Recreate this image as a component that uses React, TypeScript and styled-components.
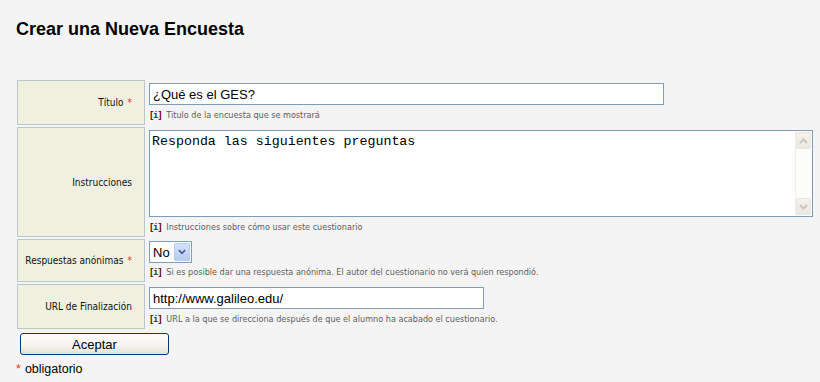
import React from "react";
import styled, { createGlobalStyle } from "styled-components";

const Global = createGlobalStyle`
  html, body { margin: 0; padding: 0; background: #f4f4f4; }
  body { font-family: "Liberation Sans", Arial, sans-serif; color: #000; }
`;

const Page = styled.div`
  padding: 0 0 0 16px;
  width: 820px;
  height: 382px;
  box-sizing: border-box;
  overflow: hidden;
`;

const Title = styled.h1`
  margin: 0;
  padding-top: 18px;
  height: 80px;
  box-sizing: border-box;
  font-family: "Liberation Sans", Arial, sans-serif;
  font-size: 18px;
  font-weight: bold;
  line-height: 22px;
  color: #000;
`;

const FormGrid = styled.div`
  display: grid;
  grid-template-columns: 128px 667px;
  column-gap: 2px;
  row-gap: 2px;
  margin-left: 1px;
`;

const LabelCell = styled.div`
  box-sizing: border-box;
  background: #eff0e0;
  border: 1px solid #bdc6c6;
  display: flex;
  align-items: center;
  justify-content: flex-end;
  padding-right: 12px;
  font-family: "DejaVu Sans Condensed", "DejaVu Sans", sans-serif;
  font-stretch: semi-condensed;
  font-size: 10px;
  color: #111;
  white-space: nowrap;
`;

const Req = styled.span`
  color: #e8322e;
  margin-left: 4px;
`;

const FieldCell = styled.div`
  padding: 3px 2px;
  display: flex;
  flex-direction: column;
  align-items: flex-start;
`;

const TextInput = styled.input<{ $w: number }>`
  box-sizing: border-box;
  width: ${(p) => p.$w}px;
  height: 22px;
  border: 1px solid #7f9db9;
  background: #fff;
  margin: 0;
  padding: 0 3px;
  font-family: "Liberation Sans", Arial, sans-serif;
  font-size: 13px;
  color: #000;
  outline: none;
`;

const AreaBox = styled.div`
  box-sizing: border-box;
  width: 664px;
  height: 87px;
  border: 1px solid #7f9db9;
  background: #fff;
  display: flex;
`;

const Area = styled.textarea`
  flex: 1;
  border: none;
  resize: none;
  margin: 0;
  padding: 3px 2px;
  font-family: "Liberation Mono", "Courier New", monospace;
  font-size: 13.3px;
  line-height: 15px;
  color: #000;
  background: #fff;
  outline: none;
  overflow: hidden;
`;

const ScrollBar = styled.div`
  width: 17px;
  padding: 1px 1px 1px 0;
  box-sizing: border-box;
  background: #fcfcf8;
  border-left: 1px solid #f1efe6;
  display: flex;
  flex-direction: column;
  justify-content: space-between;
`;

const ScrollBtn = styled.div`
  height: 15px;
  border: 1px solid #e8e6dc;
  border-radius: 2px;
  background: linear-gradient(#f3f2ec, #e9e8e0);
  display: flex;
  align-items: center;
  justify-content: center;
`;

const SelectBox = styled.div`
  box-sizing: border-box;
  width: 43px;
  height: 22px;
  margin: -1px 0;
  border: 1px solid #7f9db9;
  background: #fff;
  display: flex;
  align-items: center;
  padding: 1px;
`;

const SelectText = styled.span`
  flex: 1;
  padding-left: 2px;
  font-family: "Liberation Sans", Arial, sans-serif;
  font-size: 13px;
  color: #000;
`;

const DropBtn = styled.div`
  box-sizing: border-box;
  width: 16px;
  height: 18px;
  border: 1px solid #b9cbf3;
  border-radius: 1px;
  background: linear-gradient(#d4e0fd, #b7cbf9);
  display: flex;
  align-items: center;
  justify-content: center;
`;

const Hint = styled.div`
  height: 17px;
  box-sizing: border-box;
  padding-top: 3px;
  line-height: 14px;
  font-family: "DejaVu Sans Condensed", "DejaVu Sans", sans-serif;
  font-stretch: semi-condensed;
  font-size: 9px;
  color: #5e5e5e;
  white-space: nowrap;
`;

const InfoMark = styled.span`
  font-family: "Liberation Mono", "Courier New", monospace;
  font-weight: bold;
  font-size: 9px;
  letter-spacing: -1.3px;
  color: #600;
  margin-right: 5px;
  & > b {
    color: #333;
  }
`;

const Submit = styled.button`
  margin: 4px 0 0 4px;
  box-sizing: border-box;
  width: 149px;
  height: 22px;
  border: 1px solid #003c74;
  border-radius: 3px;
  background: linear-gradient(#ffffff, #f4f3ee 60%, #e3e1d6);
  font-family: "Liberation Sans", Arial, sans-serif;
  font-size: 13px;
  color: #000;
  padding: 0;
  display: block;
`;

const Note = styled.div`
  margin-top: 7px;
  font-family: "Liberation Sans", Arial, sans-serif;
  font-size: 12.5px;
  line-height: 15px;
  color: #000;
`;

const NoteStar = styled.span`
  color: #e8322e;
  margin-right: 4px;
`;

const Chevron = ({ up, color, w = 9 }: { up?: boolean; color: string; w?: number }) => (
  <svg width={w} height={6} viewBox="0 0 9 6">
    <path
      d={up ? "M1 5 L4.5 1.5 L8 5" : "M1 1 L4.5 4.5 L8 1"}
      fill="none"
      stroke={color}
      strokeWidth={2}
    />
  </svg>
);

const HintLine = ({ children }: { children: React.ReactNode }) => (
  <Hint>
    <InfoMark>
      [<b>i</b>]
    </InfoMark>
    {children}
  </Hint>
);

export default function App() {
  return (
    <Page>
      <Global />
      <Title>Crear una Nueva Encuesta</Title>
      <FormGrid>
        <LabelCell>
          Título<Req>*</Req>
        </LabelCell>
        <FieldCell>
          <TextInput $w={515} defaultValue="¿Qué es el GES?" />
          <HintLine>Titulo de la encuesta que se mostrará</HintLine>
        </FieldCell>

        <LabelCell>Instrucciones</LabelCell>
        <FieldCell>
          <AreaBox>
            <Area defaultValue="Responda las siguientes preguntas" />
            <ScrollBar>
              <ScrollBtn>
                <Chevron up color="#cac8bb" />
              </ScrollBtn>
              <ScrollBtn>
                <Chevron color="#cac8bb" />
              </ScrollBtn>
            </ScrollBar>
          </AreaBox>
          <HintLine>Instrucciones sobre cómo usar este cuestionario</HintLine>
        </FieldCell>

        <LabelCell>
          Respuestas anónimas<Req>*</Req>
        </LabelCell>
        <FieldCell>
          <SelectBox>
            <SelectText>No</SelectText>
            <DropBtn>
              <Chevron color="#4d6185" w={8} />
            </DropBtn>
          </SelectBox>
          <HintLine>
            Si es posible dar una respuesta anónima. El autor del cuestionario no verá quien respondió.
          </HintLine>
        </FieldCell>

        <LabelCell>URL de Finalización</LabelCell>
        <FieldCell>
          <TextInput $w={335} defaultValue="http://www.galileo.edu/" />
          <HintLine>
            URL a la que se direcciona después de que el alumno ha acabado el cuestionario.
          </HintLine>
        </FieldCell>
      </FormGrid>
      <Submit type="button">Aceptar</Submit>
      <Note>
        <NoteStar>*</NoteStar>obligatorio
      </Note>
    </Page>
  );
}
